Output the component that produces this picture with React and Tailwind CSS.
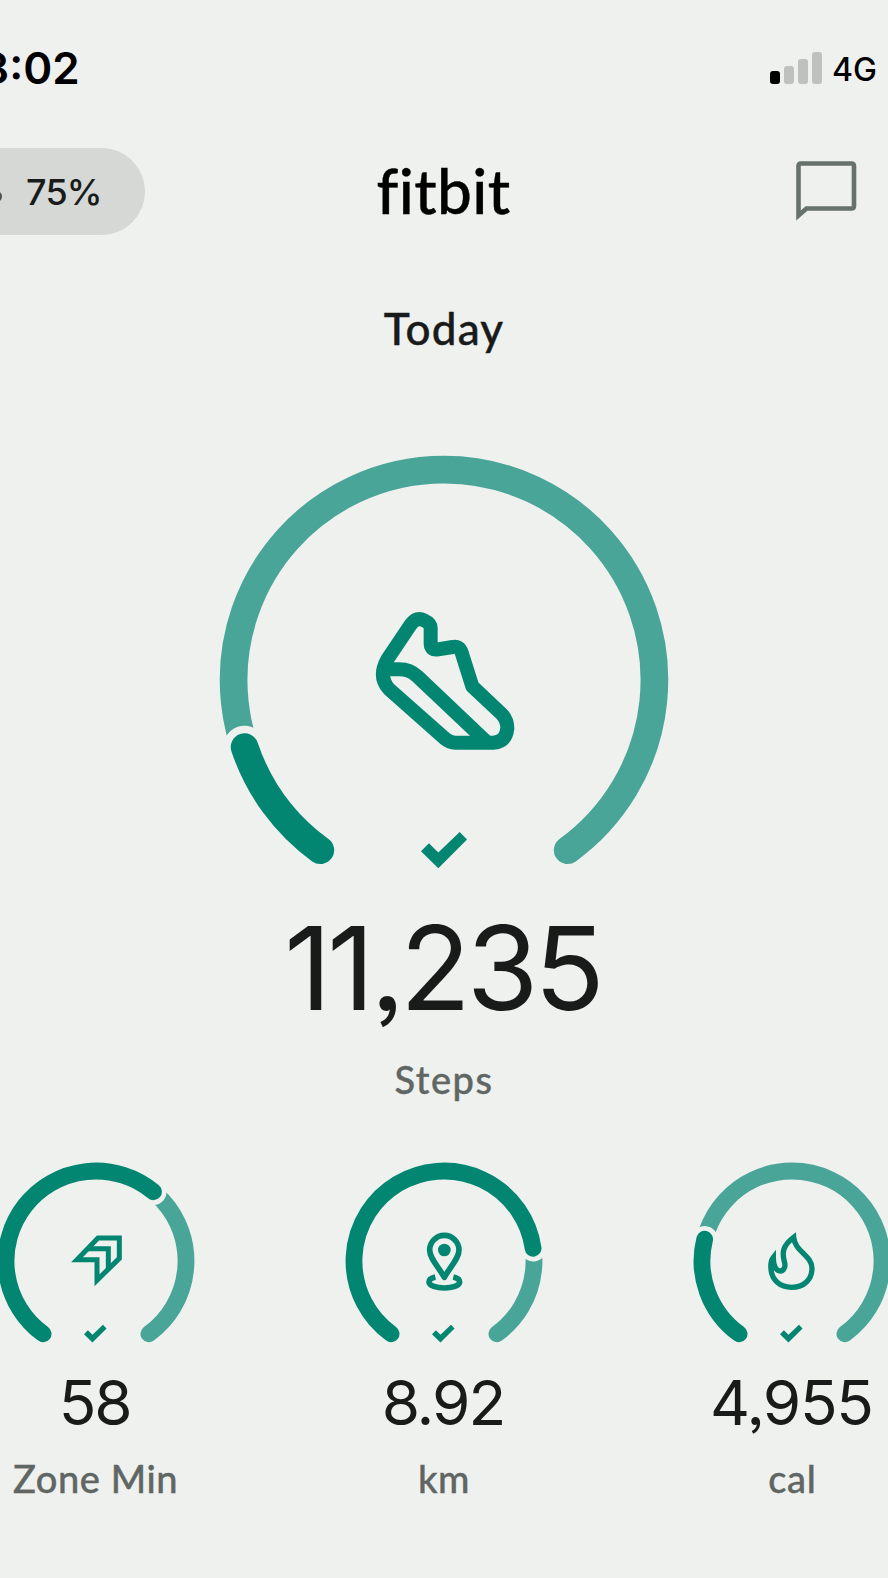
const DARK = '#028671';
const LIGHT = '#49a598';
const BG = '#eef1ee';

// Gauge opening is centred at the bottom, 36 degrees to each side
const START = 36;
const END = 324;

// Point on a circle, degrees are clockwise from straight down
function pointAt(radius, deg) {
  const rad = (deg * Math.PI) / 180;
  return [-radius * Math.sin(rad), radius * Math.cos(rad)];
}

function arcPath(radius, from, to) {
  const [x1, y1] = pointAt(radius, from);
  const [x2, y2] = pointAt(radius, to);
  const large = to - from > 180 ? 1 : 0;
  return `M${x1} ${y1}A${radius} ${radius} 0 ${large} 1 ${x2} ${y2}`;
}

const stats = [
  { label: 'Zone Min', value: '58', progress: 219.7, icon: <ZoneIcon />, tracking: 'tracking-[-2px]' },
  { label: 'km', value: '8.92', progress: 261.9, icon: <PinIcon />, tracking: 'tracking-[-2px]' },
  { label: 'cal', value: '4,955', progress: 104, icon: <FlameIcon />, tracking: 'tracking-[-1.3px]' }
];

export default function App() {
  return (
    <div className="h-[1578px] w-[888px] overflow-hidden bg-[#eef1ee] font-['Inter','Liberation_Sans',sans-serif] text-[#191b1a]">
      <StatusBar />
      <Header />

      <main className="flex flex-col items-center">
        <h1 className="mt-[71px] font-['Lato','Liberation_Sans',sans-serif] text-[44px] leading-none font-medium tracking-[1.2px] [-webkit-text-stroke:0.4px_currentColor]">
          Today
        </h1>

        {/* Main gauge */}
        <div className="mt-[105px]">
          <Gauge radius={210.4} stroke={27.7} gap={7.5} progress={71.4} viewBox="-225 -225 450 420" className="h-[420px] w-[450px]">
            <ShoeIcon />
            <Check transform="translate(-23 152)" />
          </Gauge>
        </div>
        <div className="mt-[35px] mr-[3px] text-[116px] leading-none tracking-[-4px] [font-feature-settings:'ss03']">11,235</div>
        <Label className="mt-[34px] tracking-[1.5px]">Steps</Label>

        {/* Secondary gauges */}
        <div className="mt-[63.5px] grid w-[1045px] shrink-0 grid-cols-3">
          {stats.map(stat => (
            <StatGauge key={stat.label} {...stat} />
          ))}
        </div>
      </main>
    </div>
  );
}

function StatusBar() {
  return (
    <div className="flex h-[148px] justify-between pt-[46px]">
      <div className="-ml-[19px] text-[44px] leading-none font-semibold text-black">8:02</div>
      <div className="flex gap-[10px] pr-[11px]">
        <div className="flex h-[38px] items-end gap-1">
          <div className="h-[13px] w-[10px] rounded-[3px] bg-black" />
          <div className="h-[18px] w-[10px] rounded-[3px] bg-[#bfc1bf]" />
          <div className="h-[25px] w-[10px] rounded-[3px] bg-[#bfc1bf]" />
          <div className="h-[32px] w-[10px] rounded-[3px] bg-[#bfc1bf]" />
        </div>
        <div className="pt-[8px] text-[32px] leading-none font-medium text-black">4G</div>
      </div>
    </div>
  );
}

function Header() {
  return (
    <header className="grid h-[87px] grid-cols-3 items-center">
      <div className="flex h-[87px] w-[145px] items-center rounded-r-full bg-[#d5d8d5]">
        <div className="-ml-[9px] mt-[9px] h-[11px] w-[11px] rounded-full bg-[#4d5250]" />
        <div className="ml-[24px] text-[36px] leading-none font-medium tracking-[-0.8px]">75%</div>
      </div>
      <div className="mr-[1px] mb-[4px] text-center font-['Lato','Liberation_Sans',sans-serif] text-[62px] leading-none font-medium tracking-[0.4px] text-black [font-variant-ligatures:none] [-webkit-text-stroke:0.4px_currentColor]">
        fitbit
      </div>
      <svg className="mb-[2px] ml-auto mr-[31px] h-[62px] w-[61px]" viewBox="0 0 61 62" fill="none" stroke="#68726c" strokeWidth="4.600">
        <path d="M2.500 55.500V6Q2.500 3.500 5 3.500H55.500Q58 3.500 58 6V46Q58 48.500 55.500 48.500H10.500Z" />
      </svg>
    </header>
  );
}

function StatGauge({ label, value, progress, icon, tracking }) {
  return (
    <div className="flex flex-col items-center">
      <Gauge radius={90} stroke={16.8} gap={4.8} progress={progress} viewBox="-99 -99 198 184" className="h-[184px] w-[198px]">
        {icon}
        <Check transform="translate(-12 63.800) scale(.49)" />
      </Gauge>
      <div className={`mt-[26px] mr-[2px] text-[62px] leading-none [font-feature-settings:'ss03'] ${tracking}`}>{value}</div>
      <Label className="mt-[25px] tracking-[0.6px]">{label}</Label>
    </div>
  );
}

function Label({ className, children }) {
  return (
    <div className={`font-['Lato','Liberation_Sans',sans-serif] text-[38px] leading-none font-medium text-[#5f6663] [-webkit-text-stroke:0.4px_currentColor] ${className}`}>
      {children}
    </div>
  );
}

function Gauge({ radius, stroke, gap, progress, viewBox, className, children }) {
  return (
    <svg className={className} viewBox={viewBox} fill="none" strokeLinecap="round">
      <path d={arcPath(radius, START, END)} stroke={LIGHT} strokeWidth={stroke} />
      <path d={arcPath(radius, START, progress)} stroke={BG} strokeWidth={stroke + gap * 2} />
      <path d={arcPath(radius, START, progress)} stroke={DARK} strokeWidth={stroke} />
      {children}
    </svg>
  );
}

function Check({ transform }) {
  return <path transform={transform} d="M0 19.300L8 11.200L17.300 20.500L38.700 0L46 7.600L17.300 36.300Z" fill={DARK} />;
}

function ShoeIcon() {
  return (
    <g transform="translate(-94 -90) scale(.3333)" stroke={DARK} strokeWidth="42" strokeLinecap="butt" strokeLinejoin="round">
      <path d="M112 208L182 104Q200 80 222 91Q242 100 242 114V160Q242 182 264 178L308 171Q328 166 335 188L367 289L455 372Q472 390 472 415Q468 455 430 458H316Q299 458 285 446L116 296Q84 260 112 208Z" />
      <path d="M102 238H148Q180 238 203 260L410 456" />
    </g>
  );
}

function ZoneIcon() {
  return (
    <g transform="scale(.3333) translate(-288 -333)" stroke={DARK} strokeWidth="15" strokeLinecap="butt" strokeMiterlimit="10">
      <path d="M231 329L294 264H358V325L291 391V329Z" />
      <path d="M262 296H325V360" />
    </g>
  );
}

function PinIcon() {
  return (
    <g transform="scale(.3333) translate(-342 -333)" stroke={DARK} strokeWidth="17">
      <path d="M343 382C325 350 299 325 299 300A44 44 0 0 1 387 300C387 325 361 350 343 382Z" strokeLinejoin="round" />
      <circle cx="343" cy="300" r="19" fill={DARK} stroke="none" />
      <path d="M316 381C302 384 297 391 297 396C297 407 320 414 343 414S389 407 389 396C389 391 384 384 370 381" strokeLinecap="butt" />
    </g>
  );
}

function FlameIcon() {
  return (
    <g transform="scale(.3333) translate(-336 -333)" stroke={DARK} strokeWidth="16" strokeLinejoin="miter">
      <path d="M341 262C310 285 305 306 313 335C320 356 306 367 294 361C281 354 280 338 280 322C272 332 272 348 273 357C275 390 300 412 335 412C372 412 396 388 396 355C396 316 345 305 341 262Z" />
    </g>
  );
}
